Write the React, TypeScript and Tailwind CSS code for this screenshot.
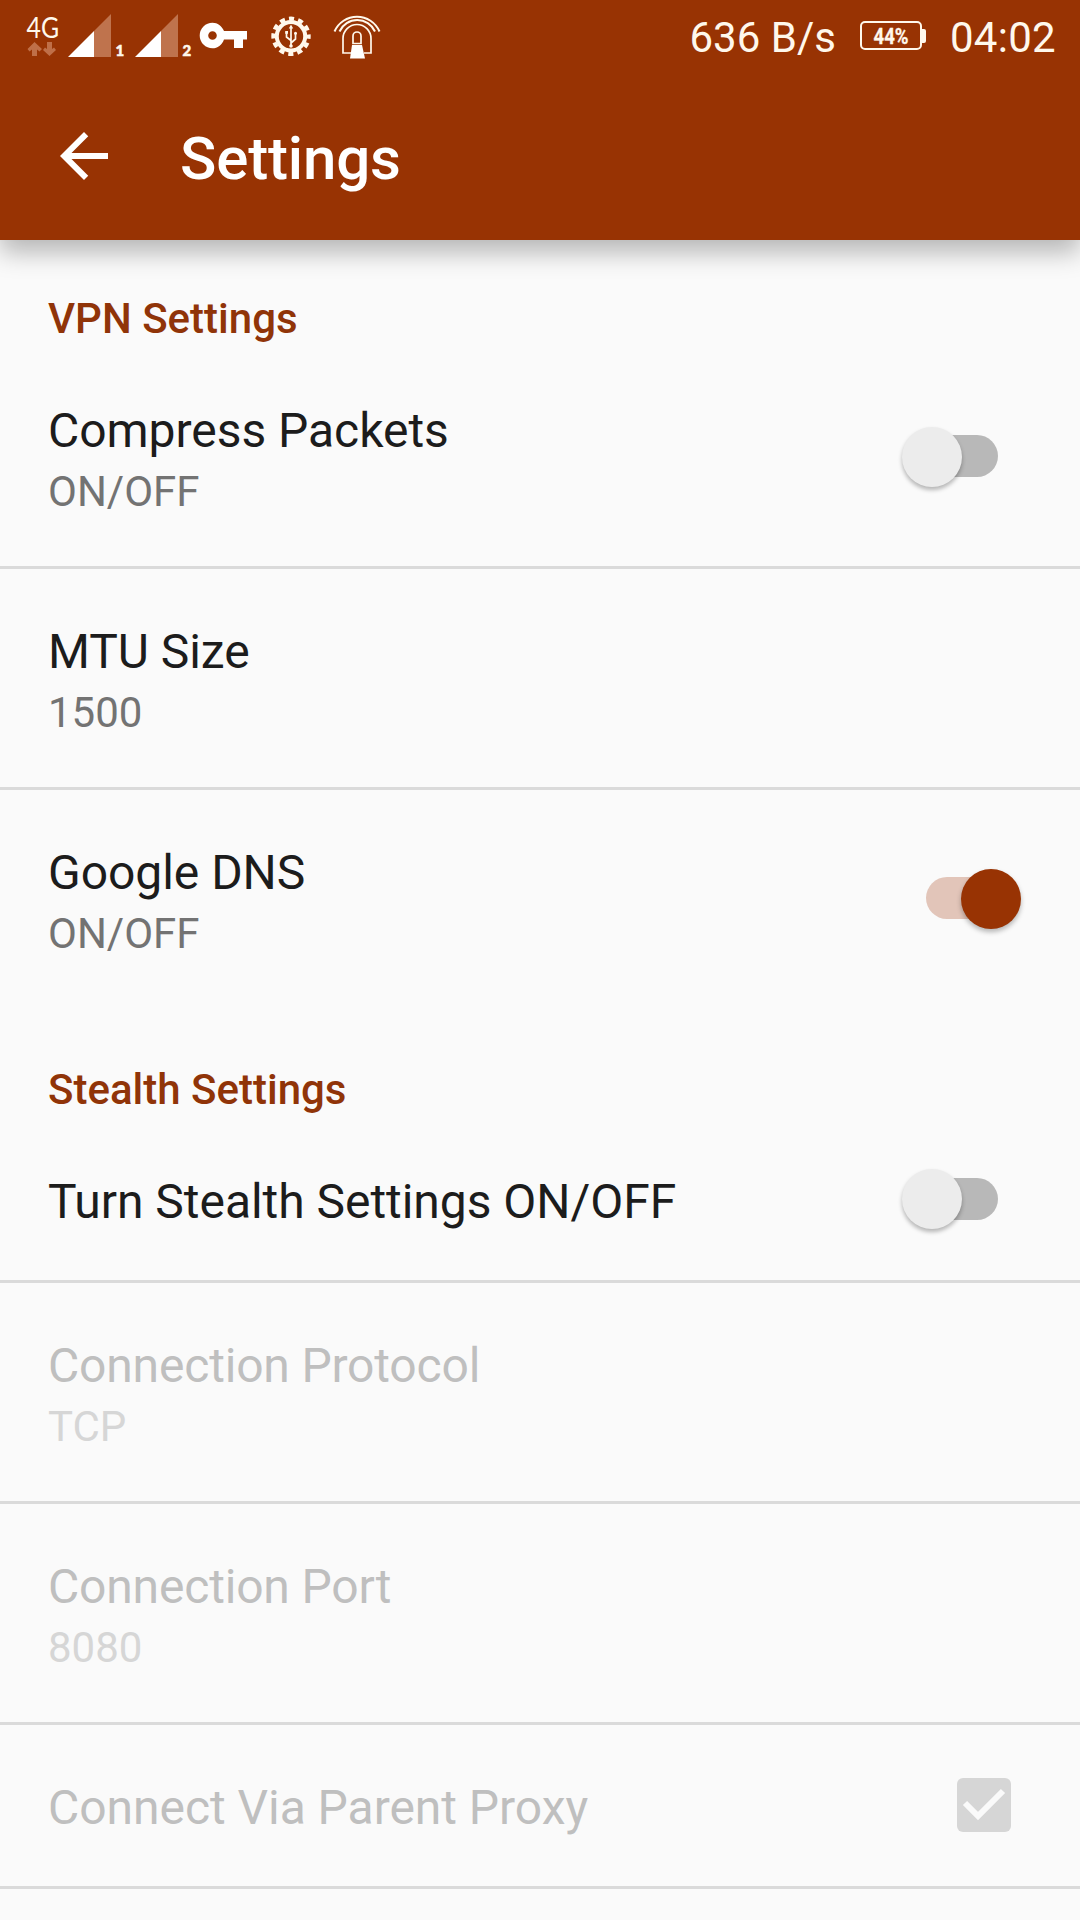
import React from "react";

function StatusBar() {
  return (
    <div className="flex h-18 items-start justify-between">
      <svg width="400" height="72" viewBox="0 0 400 72" fill="#fff8ec">
        <text x="26.500" y="38" className="font-[Lato]" fontSize="28" textLength="32.500" lengthAdjust="spacingAndGlyphs">4G</text>
        <path fill="#bf6f48" d="M34.500 42L42 49L39.500 51.500L37 49.500V56H32V49.500L29.500 51.500L27.500 49Z" />
        <path fill="#bf6f48" d="M47 42H52V49L54 47.500L56 50L49.500 56L43 50L45 47.500L47 49Z" />
        <path d="M68 57L94 31V57Z" fill="#fff" />
        <path d="M94 31L111 14V57H94Z" fill="#bf734d" />
        <path d="M135 57L161 31V57Z" fill="#fff" />
        <path d="M161 31L178 14V57H161Z" fill="#bf734d" />
        <text x="115.500" y="55.500" className="font-[Lato]" fontSize="15" fontWeight="900" stroke="#fff8ec" strokeWidth=".5">1</text>
        <text x="182.500" y="55.500" className="font-[Lato]" fontSize="15" fontWeight="900" stroke="#fff8ec" strokeWidth=".5">2</text>
        <path fillRule="evenodd" fill="#fff" d="M212.500 22.700C217.500 22.700 222 26 224 31H247V39.500H243V48H234V39.500H224C222 45 217.500 48.300 212.500 48.300A12.800 12.800 0 0 1 212.500 22.700ZM212.500 31.200A4.300 4.300 0 1 0 212.500 39.800A4.300 4.300 0 0 0 212.500 31.200Z" />
        <g fill="none" stroke="#fff8ec">
          <circle cx="291" cy="36.300" r="14.200" strokeWidth="4" />
          <circle cx="291" cy="36.300" r="17.700" strokeWidth="4" strokeDasharray="5.200 4.068" strokeDashoffset="2.600" />
          <path d="M291 46V27M291 43L295.500 39V33.500M291 40.500L286.500 37V32" strokeWidth="1.700" />
        </g>
        <path d="M288.800 28.500L291 24.500L293.200 28.500Z" />
        <circle cx="291" cy="46" r="1.800" />
        <rect x="285.200" y="31" width="2.800" height="2.800" />
        <circle cx="295.500" cy="33.300" r="1.500" />
        <g fill="none" stroke="#fff8ec" strokeWidth="1.700">
          <path d="M351 53H343V38.500A14 14 0 0 1 371 38.500V53H364" />
          <path d="M339.500 31.500A19.500 19.500 0 0 1 375 31.500" strokeWidth="2" />
          <path d="M334.500 31.500A24.500 24.500 0 0 1 379.500 31.500" strokeWidth="2" />
          <path d="M353 43.500V36A4 4 0 0 1 361 36V43.500Z" />
        </g>
        <path d="M352 45H362L365 58.500H350Z" fill="#fff" />
      </svg>
      <div className="flex items-center pr-6 text-[42px] leading-[49px] text-[#fff8ec]">
        <span className="mt-[3px]">636 B/s</span>
        <svg className="ml-6" width="68" height="72" viewBox="0 0 68 72">
          <rect x="1" y="22" width="60" height="27" rx="4" fill="none" stroke="#fff8ec" strokeWidth="2" />
          <path d="M62 29H64Q66 29 66 31V41Q66 43 64 43H62Z" fill="#fff8ec" />
          <text x="13.500" y="44" fontSize="22" fontWeight="700" fill="#fff8ec" stroke="#fff8ec" strokeWidth=".3" textLength="35" lengthAdjust="spacingAndGlyphs">44%</text>
        </svg>
        <span className="mt-[3px] ml-[22px] tracking-[0.3px]">04:02</span>
      </div>
    </div>
  );
}

function Switch({ on }: { on?: boolean }) {
  return on ? (
    <div className="mr-[58px] mb-[2px] flex h-[60px] w-[96px] items-center">
      <div className="h-[42px] w-[62px] rounded-l-full bg-[#e2c5b9]" />
      <div className="mt-px -ml-[27px] size-[60px] shrink-0 rounded-full bg-[#983303] shadow-[0_3px_5px_rgba(0,0,0,0.28)]" />
    </div>
  ) : (
    <div className="mr-[82px] mb-[2px] flex h-[60px] w-[96px] items-center">
      <div className="z-10 mt-px size-[60px] shrink-0 rounded-full bg-[#ececec] shadow-[0_3px_4px_rgba(0,0,0,0.28)]" />
      <div className="-ml-[26px] h-[42px] w-[62px] shrink-0 rounded-r-full bg-[#b8b8b8]" />
    </div>
  );
}

function Checkbox() {
  return (
    <div className="mr-[69px] mb-[2px] size-[54px] rounded-[6px] bg-[#d6d6d6]">
      <svg width="54" height="54" viewBox="0 0 54 54" fill="none" stroke="#fafafa" strokeWidth="6">
        <path d="M8 25L21 38L46 13" />
      </svg>
    </div>
  );
}

type RowProps = {
  title: string;
  summary?: string;
  disabled?: boolean;
  last?: boolean;
  tight?: boolean;
  children?: React.ReactNode;
};

function Row({ title, summary, disabled, last, tight, children }: RowProps) {
  return (
    <div
      className={`flex shrink-0 items-center justify-between border-b-3 pl-12 ${
        summary ? "h-[221px]" : "h-[164px]"
      } ${last ? "border-transparent" : "border-[#dadada]"}`}
    >
      <div className="mt-1">
        <div
          className={`text-[48px] leading-[56px] ${tight ? "tracking-[-0.18px]" : "tracking-[-0.04px]"} ${
            disabled ? "text-[#bfbfbf]" : "text-[#1c1c1c]"
          }`}
        >
          {title}
        </div>
        {summary && (
          <div className={`mt-2 text-[42px] leading-[49px] ${disabled ? "text-[#d6d6d6]" : "text-[#737373]"}`}>
            {summary}
          </div>
        )}
      </div>
      {children}
    </div>
  );
}

function Category({ children }: { children: string }) {
  return (
    <h2 className="h-[108px] shrink-0 pt-[54px] pl-12 text-[42px] leading-[49px] font-medium text-[#903408]">{children}</h2>
  );
}

export default function App() {
  return (
    <div className="flex h-[1920px] w-[1080px] flex-col overflow-hidden bg-[#fafafa] font-[Roboto,sans-serif]">
      <header className="z-10 h-60 shrink-0 bg-[#983303] shadow-[0_12px_24px_rgba(0,0,0,0.28)]">
        <StatusBar />
        <div className="flex h-42 items-center">
          <svg className="ml-12" width="72" height="72" viewBox="0 0 24 24" fill="#fff">
            <path d="M20 11H7.830l5.590-5.590L12 4l-8 8 8 8 1.410-1.410L7.830 13H20v-2z" />
          </svg>
          <h1 className="mt-[5px] ml-15 text-[60px] leading-[70px] font-medium tracking-[-0.15px] text-white">Settings</h1>
        </div>
      </header>
      <Category>VPN Settings</Category>
      <Row title="Compress Packets" summary="ON/OFF"><Switch /></Row>
      <Row title="MTU Size" summary="1500" />
      <Row title="Google DNS" summary="ON/OFF" last><Switch on /></Row>
      <Category>Stealth Settings</Category>
      <Row title="Turn Stealth Settings ON/OFF"><Switch /></Row>
      <Row title="Connection Protocol" summary="TCP" disabled tight />
      <Row title="Connection Port" summary="8080" disabled tight />
      <Row title="Connect Via Parent Proxy" disabled><Checkbox /></Row>
    </div>
  );
}
